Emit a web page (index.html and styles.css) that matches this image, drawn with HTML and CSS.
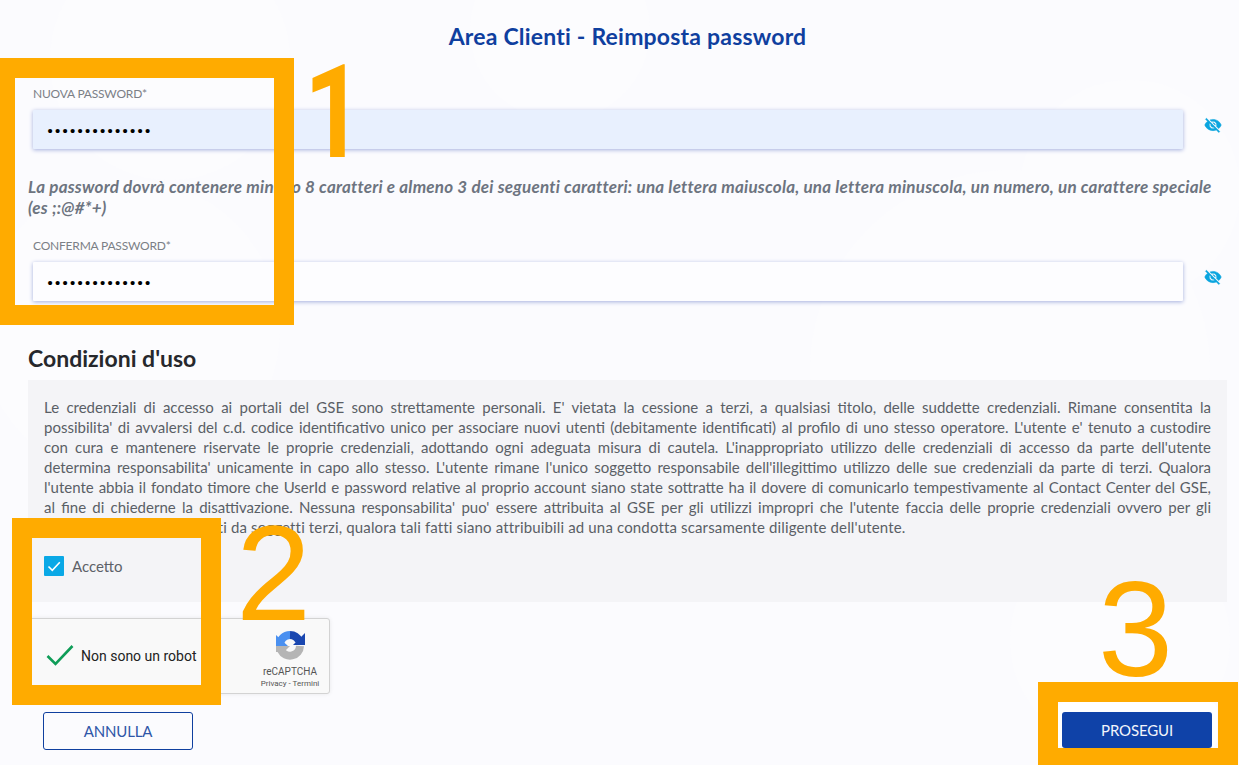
FILE: index.html
```html
<!DOCTYPE html>
<html lang="it">
<head>
  <meta charset="utf-8" />
  <title>Area Clienti - Reimposta password</title>
  <link rel="stylesheet" href="styles.css">
</head>

<body>
  <svg class="bg-shapes" viewBox="0 0 1239 765" aria-hidden="true">
    <circle cx="170" cy="60" r="120" />
    <circle cx="130" cy="330" r="150" />
    <circle cx="560" cy="30" r="90" />
    <circle cx="1010" cy="370" r="200" />
    <circle cx="1130" cy="190" r="110" />
    <circle cx="1120" cy="640" r="110" />
  </svg>

  <div class="page">
    <h1 class="title">Area Clienti - Reimposta password</h1>

    <div class="field">
      <label class="field-label" for="newPassword">NUOVA PASSWORD*</label>
      <div class="field-row">
        <input class="field-input filled" id="newPassword" type="password" value="Password12345!">
        <svg class="eye" viewBox="0 0 24 24"><path d="M12 7c2.76 0 5 2.24 5 5 0 .65-.13 1.26-.36 1.83l2.92 2.92c1.51-1.26 2.7-2.89 3.43-4.75-1.73-4.39-6-7.5-11-7.5-1.4 0-2.74.25-3.98.7l2.16 2.16C10.74 7.13 11.35 7 12 7zM2 4.27l2.28 2.28.46.46C3.08 8.3 1.78 10.02 1 12c1.73 4.39 6 7.5 11 7.5 1.55 0 3.03-.3 4.38-.84l.42.42L19.73 22 21 20.73 3.27 3 2 4.27zM7.53 9.8l1.55 1.55c-.05.21-.08.43-.08.65 0 1.66 1.34 3 3 3 .22 0 .44-.03.65-.08l1.55 1.55c-.67.33-1.41.53-2.2.53-2.76 0-5-2.24-5-5 0-.79.2-1.53.53-2.2zm4.31-.78l3.15 3.15.02-.16c0-1.66-1.34-3-3-3l-.17.01z"/></svg>
      </div>
    </div>

    <p class="hint">La password dovrà contenere minimo 8 caratteri e almeno 3 dei seguenti caratteri: una lettera maiuscola, una lettera minuscola, un numero, un carattere speciale (es ;:@#*+)</p>

    <div class="field">
      <label class="field-label" for="confirmPassword">CONFERMA PASSWORD*</label>
      <div class="field-row">
        <input class="field-input" id="confirmPassword" type="password" value="Password12345!">
        <svg class="eye" viewBox="0 0 24 24"><path d="M12 7c2.76 0 5 2.24 5 5 0 .65-.13 1.26-.36 1.83l2.92 2.92c1.51-1.26 2.7-2.89 3.43-4.75-1.73-4.39-6-7.5-11-7.5-1.4 0-2.74.25-3.98.7l2.16 2.16C10.74 7.13 11.35 7 12 7zM2 4.27l2.28 2.28.46.46C3.08 8.3 1.78 10.02 1 12c1.73 4.39 6 7.5 11 7.5 1.55 0 3.03-.3 4.38-.84l.42.42L19.73 22 21 20.73 3.27 3 2 4.27zM7.53 9.8l1.55 1.55c-.05.21-.08.43-.08.65 0 1.66 1.34 3 3 3 .22 0 .44-.03.65-.08l1.55 1.55c-.67.33-1.41.53-2.2.53-2.76 0-5-2.24-5-5 0-.79.2-1.53.53-2.2zm4.31-.78l3.15 3.15.02-.16c0-1.66-1.34-3-3-3l-.17.01z"/></svg>
      </div>
    </div>

    <h2 class="terms-title">Condizioni d'uso</h2>
    <div class="terms">
      <div class="terms-line">Le credenziali di accesso ai portali del GSE sono strettamente personali. E' vietata la cessione a terzi, a qualsiasi titolo, delle suddette credenziali. Rimane consentita la</div>
      <div class="terms-line">possibilita' di avvalersi del c.d. codice identificativo unico per associare nuovi utenti (debitamente identificati) al profilo di uno stesso operatore. L'utente e' tenuto a custodire</div>
      <div class="terms-line">con cura e mantenere riservate le proprie credenziali, adottando ogni adeguata misura di cautela. L'inappropriato utilizzo delle credenziali di accesso da parte dell'utente</div>
      <div class="terms-line">determina responsabilita' unicamente in capo allo stesso. L'utente rimane l'unico soggetto responsabile dell'illegittimo utilizzo delle sue credenziali da parte di terzi. Qualora</div>
      <div class="terms-line">l'utente abbia il fondato timore che UserId e password relative al proprio account siano state sottratte ha il dovere di comunicarlo tempestivamente al Contact Center del GSE,</div>
      <div class="terms-line">al fine di chiederne la disattivazione. Nessuna responsabilita' puo' essere attribuita al GSE per gli utilizzi impropri che l'utente faccia delle proprie credenziali ovvero per gli</div>
      <div class="terms-last">utilizzi fraudolenti compiuti da soggetti terzi, qualora tali fatti siano attribuibili ad una condotta scarsamente diligente dell'utente.</div>
      <label class="accept">
        <span class="checkbox"><svg viewBox="0 0 20 20"><path d="M4.5 10.5l3.8 3.8 7.5-8" /></svg></span>
        Accetto
      </label>
    </div>

    <div class="captcha">
      <svg class="captcha-tick" viewBox="0 0 28 22"><path d="M1.5 12l8 8L26.5 2" /></svg>
      <span class="captcha-text">Non sono un robot</span>
      <div class="captcha-brand">
        <svg class="captcha-logo" viewBox="0 0 32 32">
          <path class="arc-grey" d="M26 17A10 10 0 0 1 7 21" />
          <path class="arc-grey-fill" d="M2 17h14l-6 6H2z" />
          <path class="arc-blue" d="M6 16A10 10 0 0 1 16 6" />
          <path class="arc-blue-fill" d="M2 6v11h12z" />
          <path class="arc-dark" d="M16 6a10 10 0 0 1 9 6" />
          <path class="arc-dark-fill" d="M31 4v12H19z" />
        </svg>
        <span class="captcha-name">reCAPTCHA</span>
        <span class="captcha-links">Privacy - Termini</span>
      </div>
    </div>

    <div class="actions">
      <button class="btn btn-outline">ANNULLA</button>
      <button class="btn btn-primary">PROSEGUI</button>
    </div>
  </div>

  <!-- annotations drawn over the screenshot -->
  <div class="mark mark-1"></div>
  <div class="mark mark-2"></div>
  <div class="mark mark-3"></div>
  <span class="mark-num num-1">1</span>
  <span class="mark-num num-2">2</span>
  <span class="mark-num num-3">3</span>
</body>
</html>
```

FILE: styles.css
```css
html, body {
  margin: 0;
  padding: 0;
  height: 765px;
  overflow: hidden;
  background: #fbfbfe;
  font-family: "Lato", "Noto Sans", sans-serif;
}

.bg-shapes {
  position: absolute;
  top: 0;
  left: 0;
  width: 1239px;
  height: 765px;
  fill: #fcfcfe;
}

.page {
  position: relative;
  padding: 0 12px 0 28px;
}

.title {
  margin: 0 0 38px;
  padding-top: 22px;
  font-size: 23px;
  line-height: 28px;
  letter-spacing: 0.2px;
  font-weight: 700;
  color: #0f3f9f;
  text-align: center;
}

.field {
  padding-left: 5px;
}

.field-label {
  display: block;
  height: 22px;
  font-size: 12px;
  line-height: 12px;
  letter-spacing: -0.2px;
  color: #7b7f86;
}

.field-row {
  display: flex;
  align-items: center;
  gap: 21px;
}

.field-input {
  box-sizing: border-box;
  width: 1150px;
  height: 39px;
  padding: 3px 14px 0;
  border: 0;
  border-radius: 1px;
  background: #fdfdff;
  box-shadow: 0 1px 4px #a3aede;
  font-family: "Roboto", sans-serif;
  font-size: 17px;
  font-weight: 700;
  letter-spacing: 1.4px;
  color: #000;
  outline: none;
}

.field-input.filled {
  background: #e8f0fe;
}

.eye {
  width: 18px;
  height: 18px;
  margin-bottom: 10px;
  fill: #0aa5df;
  stroke: #0aa5df;
  stroke-width: 0.7;
}

.hint {
  margin: 27px 0 22px;
  font-size: 17px;
  line-height: 21px;
  letter-spacing: 0.23px;
  font-weight: 700;
  font-style: italic;
  color: #6d7480;
}

.terms-title {
  margin: 43px 0 8px;
  font-size: 23px;
  line-height: 28px;
  font-weight: 700;
  color: #26282c;
}

.terms {
  height: 222px;
  box-sizing: border-box;
  padding: 17px 16px 0;
  background: #f4f4f7;
  font-size: 15px;
  line-height: 20px;
  color: #5a5f66;
}

.terms-line {
  text-align: justify;
  text-align-last: justify;
}

.terms-last {
  letter-spacing: 0.15px;
}

.accept {
  display: flex;
  align-items: center;
  gap: 8px;
  margin-top: 19px;
  font-size: 15px;
  color: #5d6168;
}

.checkbox {
  display: block;
  width: 20px;
  height: 20px;
  border-radius: 1px;
  background: #0aa8e6;
}

.checkbox svg {
  display: block;
  fill: none;
  stroke: #fff;
  stroke-width: 1.6;
}

.captcha {
  display: flex;
  align-items: center;
  box-sizing: border-box;
  width: 302px;
  height: 76px;
  margin-top: 16px;
  padding: 0 0 0 17px;
  background: #f9f9f9;
  border: 1px solid #d3d3d3;
  border-radius: 3px;
  box-shadow: 0 0 4px rgba(0, 0, 0, 0.08);
  font-family: "Roboto", sans-serif;
}

.captcha-tick {
  width: 28px;
  height: 22px;
  margin-top: -3px;
  fill: none;
  stroke: #0f9d58;
  stroke-width: 2.6;
}

.captcha-text {
  margin-left: 7px;
  font-size: 14px;
  color: #222;
}

.captcha-brand {
  display: flex;
  flex-direction: column;
  align-items: center;
  margin-left: auto;
  width: 80px;
  margin-right: -1px;
  padding-top: 6px;
}

.captcha-logo {
  width: 32px;
  height: 32px;
  fill: none;
}

.arc-blue { stroke: #4a90f0; stroke-width: 8; }
.arc-blue-fill { fill: #4a90f0; }
.arc-dark { stroke: #1a47b0; stroke-width: 8; }
.arc-dark-fill { fill: #1a47b0; }
.arc-grey { stroke: #b5b5b5; stroke-width: 8; }
.arc-grey-fill { fill: #b5b5b5; }

.captcha-name {
  font-size: 10px;
  line-height: 12px;
  margin-top: 5px;
  color: #555;
}

.captcha-links {
  font-size: 8px;
  line-height: 12px;
  color: #555;
}

.actions {
  display: flex;
  justify-content: space-between;
  padding: 18px 15px 0;
}

.btn {
  box-sizing: border-box;
  width: 150px;
  border-radius: 3px;
  font-family: "Lato", sans-serif;
  font-size: 15px;
  letter-spacing: -0.15px;
}

.btn-outline {
  height: 38px;
  background: transparent;
  border: 1px solid #0f3f9f;
  color: #2f56a8;
}

.btn-primary {
  height: 36px;
  background: #0f42a8;
  border: 0;
  color: #f2f5fb;
  box-shadow: 0 -5px 0 5px #fff;
}

.mark {
  position: absolute;
  box-sizing: border-box;
  border: 20px solid #ffab00;
}

.mark-1 { left: -5px; top: 58px; width: 299px; height: 267px; }
.mark-2 { left: 12px; top: 518px; width: 209px; height: 187px; }
.mark-3 { left: 1038px; top: 682px; width: 200px; height: 86px; }

.mark-num {
  position: absolute;
  font-family: "Liberation Sans", sans-serif;
  font-size: 135px;
  line-height: 135px;
  color: #ffab00;
}

.num-1 {
  left: 304px;
  top: 45px;
  font-family: "Roboto", sans-serif;
  font-size: 130px;
  font-weight: 700;
  transform: scaleX(0.8);
  transform-origin: left top;
}

.num-2 { left: 236px; top: 506px; }
.num-3 { left: 1098px; top: 562px; }
```
